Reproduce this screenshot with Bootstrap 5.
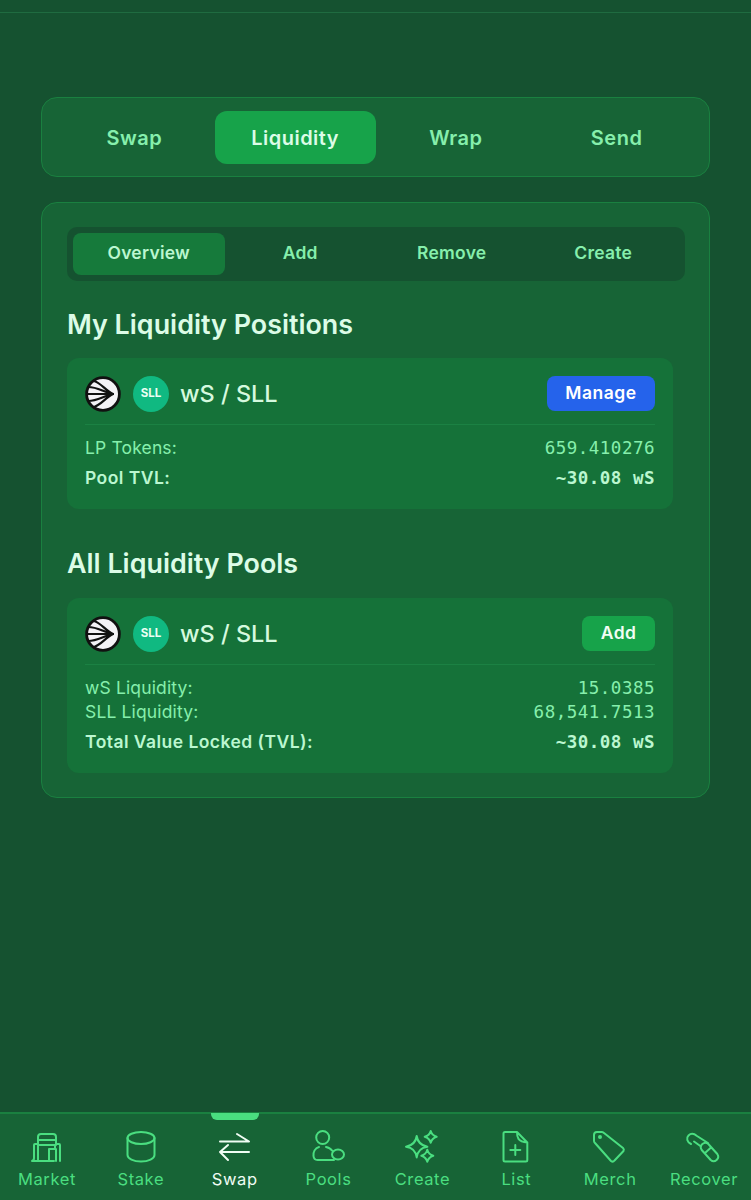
<!DOCTYPE html>
<html lang="en">
<head>
  <meta charset="UTF-8">
  <title>Liquidity</title>
  <meta name="viewport" content="width=device-width, initial-scale=1">
  <link href="https://cdn.jsdelivr.net/npm/bootstrap@5.3.0/dist/css/bootstrap.min.css" rel="stylesheet">
  <style>
    html, body { height: 100%; }
    body {
      background-color: #155230;
      font-family: Inter, "Liberation Sans", sans-serif;
      color: #bbf7d0;
    }
    .app-shell { height: 1200px; }
    .top-line { height: 13px; border-bottom: 1px solid #1f6b40; }
    .page-body { padding: 84px 41px 0; }
    .main-tabs {
      height: 80px;
      padding: 13px 12px 12px;
      background: #176436;
      border: 1px solid #1a8040;
      border-radius: 16px;
      margin-bottom: 25px;
    }
    .main-tab {
      flex: 1 1 0;
      display: flex;
      align-items: center;
      justify-content: center;
      font-size: 20px;
      font-weight: 600;
      letter-spacing: .5px;
      color: #86efac;
      border-radius: 12px;
    }
    .main-tab.on { background: #17a34a; color: #dcfce7; }
    .panel-box {
      height: 596px;
      padding: 24px 36px 24px 25px;
      background: #176436;
      border: 1px solid #1a8040;
      border-radius: 16px;
    }
    .sub-tabs {
      height: 54px;
      width: 618px;
      padding: 6px;
      background: #155230;
      border-radius: 10px;
    }
    .sub-tab {
      flex: 1 1 0;
      display: flex;
      align-items: center;
      justify-content: center;
      padding-bottom: 2px;
      font-size: 17.5px;
      font-weight: 600;
      letter-spacing: .25px;
      color: #86efac;
      border-radius: 8px;
    }
    .sub-tab.on { background: #167a3b; color: #bbf7d0; }
    .section-title {
      font-size: 26.9px;
      font-weight: 600;
      line-height: 30px;
      color: #dcfce7;
      margin: 28px 0 19px;
    }
    .section-title.second { margin: 39px 0 20px; }
    .pool-box {
      background: #157239;
      border-radius: 12px;
      padding: 18px 18px 0;
    }
    .pool-head {
      height: 49px;
      border-bottom: 1px solid #1b8143;
    }
    .pair-name { font-size: 23.5px; font-weight: 500; color: #d5f9df; margin-left: 11px; line-height: 36px; }
    .token-logo { width: 36px; height: 36px; flex: none; }
    .sll-logo {
      width: 36px;
      height: 36px;
      margin-left: 12px;
      border-radius: 50%;
      background: #10b981;
      color: #eafff4;
      font-size: 11.5px;
      font-weight: 700;
      display: flex;
      align-items: center;
      justify-content: center;
    }
    .pool-btn {
      height: 35px;
      padding: 0 18.5px;
      border: 0;
      border-radius: 8px;
      font-size: 17.5px;
      font-weight: 600;
      letter-spacing: .5px;
      color: #fff;
    }
    .btn-manage { background: #2563eb; }
    .btn-add { background: #17a34a; color: #f0fdf4; }
    .data-list { padding: 11px 0 19px; }
    .data-row {
      display: flex;
      justify-content: space-between;
      font-size: 17.5px;
      line-height: 24px;
      letter-spacing: .15px;
      color: #86efac;
    }
    .data-row.strong { font-weight: 600; letter-spacing: .45px; color: #bbf7d0; margin-top: 6px; }
    .mono { font-family: "DejaVu Sans Mono", "Liberation Mono", monospace; font-size: 17.5px; letter-spacing: .5px; }
    .bottom-bar {
      height: 88px;
      background: #176436;
      border-top: 2px solid #1a8040;
    }
    .bar-item {
      width: 94px;
      padding-top: 17px;
      position: relative;
      display: flex;
      flex-direction: column;
      align-items: center;
      font-size: 16.5px;
      line-height: 20px;
      letter-spacing: .6px;
      color: #4ade80;
    }
    .bar-item svg { width: 34px; height: 34px; margin-bottom: 4px; overflow: visible; fill: none; stroke: currentColor; stroke-width: 2; stroke-linecap: round; stroke-linejoin: round; }
    .bar-item.on { color: #f0fdf4; }
    .bar-mark {
      position: absolute;
      top: -1px;
      left: 23px;
      width: 48px;
      height: 7px;
      background: #4ade80;
      border-radius: 0 0 6px 6px;
    }
  </style>
</head>
<body>
  <div class="app-shell d-flex flex-column">
    <div class="top-line"></div>
    <div class="page-body flex-grow-1">
      <div class="main-tabs d-flex">
        <div class="main-tab">Swap</div>
        <div class="main-tab on">Liquidity</div>
        <div class="main-tab">Wrap</div>
        <div class="main-tab">Send</div>
      </div>

      <div class="panel-box">
        <div class="sub-tabs d-flex">
          <div class="sub-tab on">Overview</div>
          <div class="sub-tab">Add</div>
          <div class="sub-tab">Remove</div>
          <div class="sub-tab">Create</div>
        </div>

        <h2 class="section-title">My Liquidity Positions</h2>
        <div class="pool-box">
          <div class="pool-head d-flex align-items-start">
            <svg class="token-logo" viewBox="0 0 36 36">
              <circle cx="18" cy="18" r="16.4" fill="#f4f2f6" stroke="#111" stroke-width="2.8"/>
              <path d="M9 5c7 2 11 9 19 13M3 11c10 0 15 5 25 7M2 18h27M3 25c10 0 15-5 25-7M9 31c7-2 11-9 19-13" fill="none" stroke="#111" stroke-width="2.200"/>
            </svg>
            <div class="sll-logo">SLL</div>
            <span class="pair-name">wS / SLL</span>
            <button class="pool-btn btn-manage ms-auto">Manage</button>
          </div>
          <div class="data-list">
            <div class="data-row"><span>LP Tokens:</span><span class="mono">659.410276</span></div>
            <div class="data-row strong"><span>Pool TVL:</span><span class="mono">~30.08 wS</span></div>
          </div>
        </div>

        <h2 class="section-title second">All Liquidity Pools</h2>
        <div class="pool-box">
          <div class="pool-head d-flex align-items-start">
            <svg class="token-logo" viewBox="0 0 36 36">
              <circle cx="18" cy="18" r="16.4" fill="#f4f2f6" stroke="#111" stroke-width="2.8"/>
              <path d="M9 5c7 2 11 9 19 13M3 11c10 0 15 5 25 7M2 18h27M3 25c10 0 15-5 25-7M9 31c7-2 11-9 19-13" fill="none" stroke="#111" stroke-width="2.200"/>
            </svg>
            <div class="sll-logo">SLL</div>
            <span class="pair-name">wS / SLL</span>
            <button class="pool-btn btn-add ms-auto">Add</button>
          </div>
          <div class="data-list">
            <div class="data-row"><span>wS Liquidity:</span><span class="mono">15.0385</span></div>
            <div class="data-row"><span>SLL Liquidity:</span><span class="mono">68,541.7513</span></div>
            <div class="data-row strong"><span>Total Value Locked (TVL):</span><span class="mono">~30.08 wS</span></div>
          </div>
        </div>
      </div>
    </div>

    <nav class="bottom-bar d-flex justify-content-between">
      <div class="bar-item">
        <svg viewBox="0 0 34 34"><path d="M8 14V6a3 3 0 0 1 3-3h12a3 3 0 0 1 3 3v8M8 9h18M8 13H5a1 1 0 0 0-1 1v13a3 3 0 0 1-2 3M2 30h22M27 13h2a1 1 0 0 1 1 1v16M8 30V14h17v4M19 30V18h7v12"/></svg>
        Market
      </div>
      <div class="bar-item">
        <svg viewBox="0 0 34 34"><ellipse cx="17" cy="7" rx="13.500" ry="6"/><path d="M3.500 7v17c0 3.500 6 6.500 13.500 6.500s13.500-3 13.500-6.500V7"/></svg>
        Stake
      </div>
      <div class="bar-item on">
        <div class="bar-mark"></div>
        <svg viewBox="0 0 34 34"><path d="M2 10.500h29L19 3M31 21H2l8-7M2 21l8 8"/></svg>
        Swap
      </div>
      <div class="bar-item">
        <svg viewBox="0 0 34 34"><circle cx="10.700" cy="6.500" r="6.500"/><path d="M7 16C3 17 1 21 1.500 25c.3 3 2 4 4 4H22M14 16c3 .5 5 2 6.500 4"/><ellipse cx="26" cy="23.500" rx="6" ry="5"/></svg>
        Pools
      </div>
      <div class="bar-item">
        <svg viewBox="0 0 34 34"><path d="M11.700 5Q13 14 22.400 15.700 13 17 11.700 26.400 10.500 17 1 15.700 10.500 14 11.700 5zM25.700 0Q27 4.500 31.700 5.700 27 7 25.700 11.700 24.500 7 19.700 5.700 24.500 4.500 25.700 0zM22.300 18.700Q23.600 23.500 28.300 24.700 23.600 26 22.300 30.700 21 26 16.300 24.700 21 23.500 22.300 18.700z"/></svg>
        Create
      </div>
      <div class="bar-item">
        <svg viewBox="0 0 34 34"><path d="M6 1h12l10.300 10.500V29a1.500 1.500 0 0 1-1.500 1.500H6A1.500 1.500 0 0 1 4.500 29V2.500A1.500 1.500 0 0 1 6 1zM18 1c0 5 .5 10 10.300 10.500M16.300 14v10M11.300 19h10"/></svg>
        List
      </div>
      <div class="bar-item">
        <svg viewBox="0 0 34 34"><path d="M4 1h5a3 3 0 0 1 2 1l19 15a2.500 2.500 0 0 1 .5 3L21.500 29.500a2.500 2.500 0 0 1-3.500 .5L2 12a3 3 0 0 1-1-2V4a3 3 0 0 1 3-3z"/><circle cx="7" cy="6" r="1" fill="currentColor"/></svg>
        Merch
      </div>
      <div class="bar-item">
        <svg viewBox="0 0 34 34"><path d="M4 13C0 11-1 7 1.500 4.500 4 2 7 2.500 10 5l11 7M7 10.500l7 5M21.300 13L30.300 23A4.500 4.500 0 0 1 23.700 29L14.700 19A4.500 4.500 0 0 1 21.300 13zM18 22l6-5.500"/></svg>
        Recover
      </div>
    </nav>
  </div>
  <script src="https://cdn.jsdelivr.net/npm/bootstrap@5.3.0/dist/js/bootstrap.bundle.min.js"></script>
</body>
</html>
